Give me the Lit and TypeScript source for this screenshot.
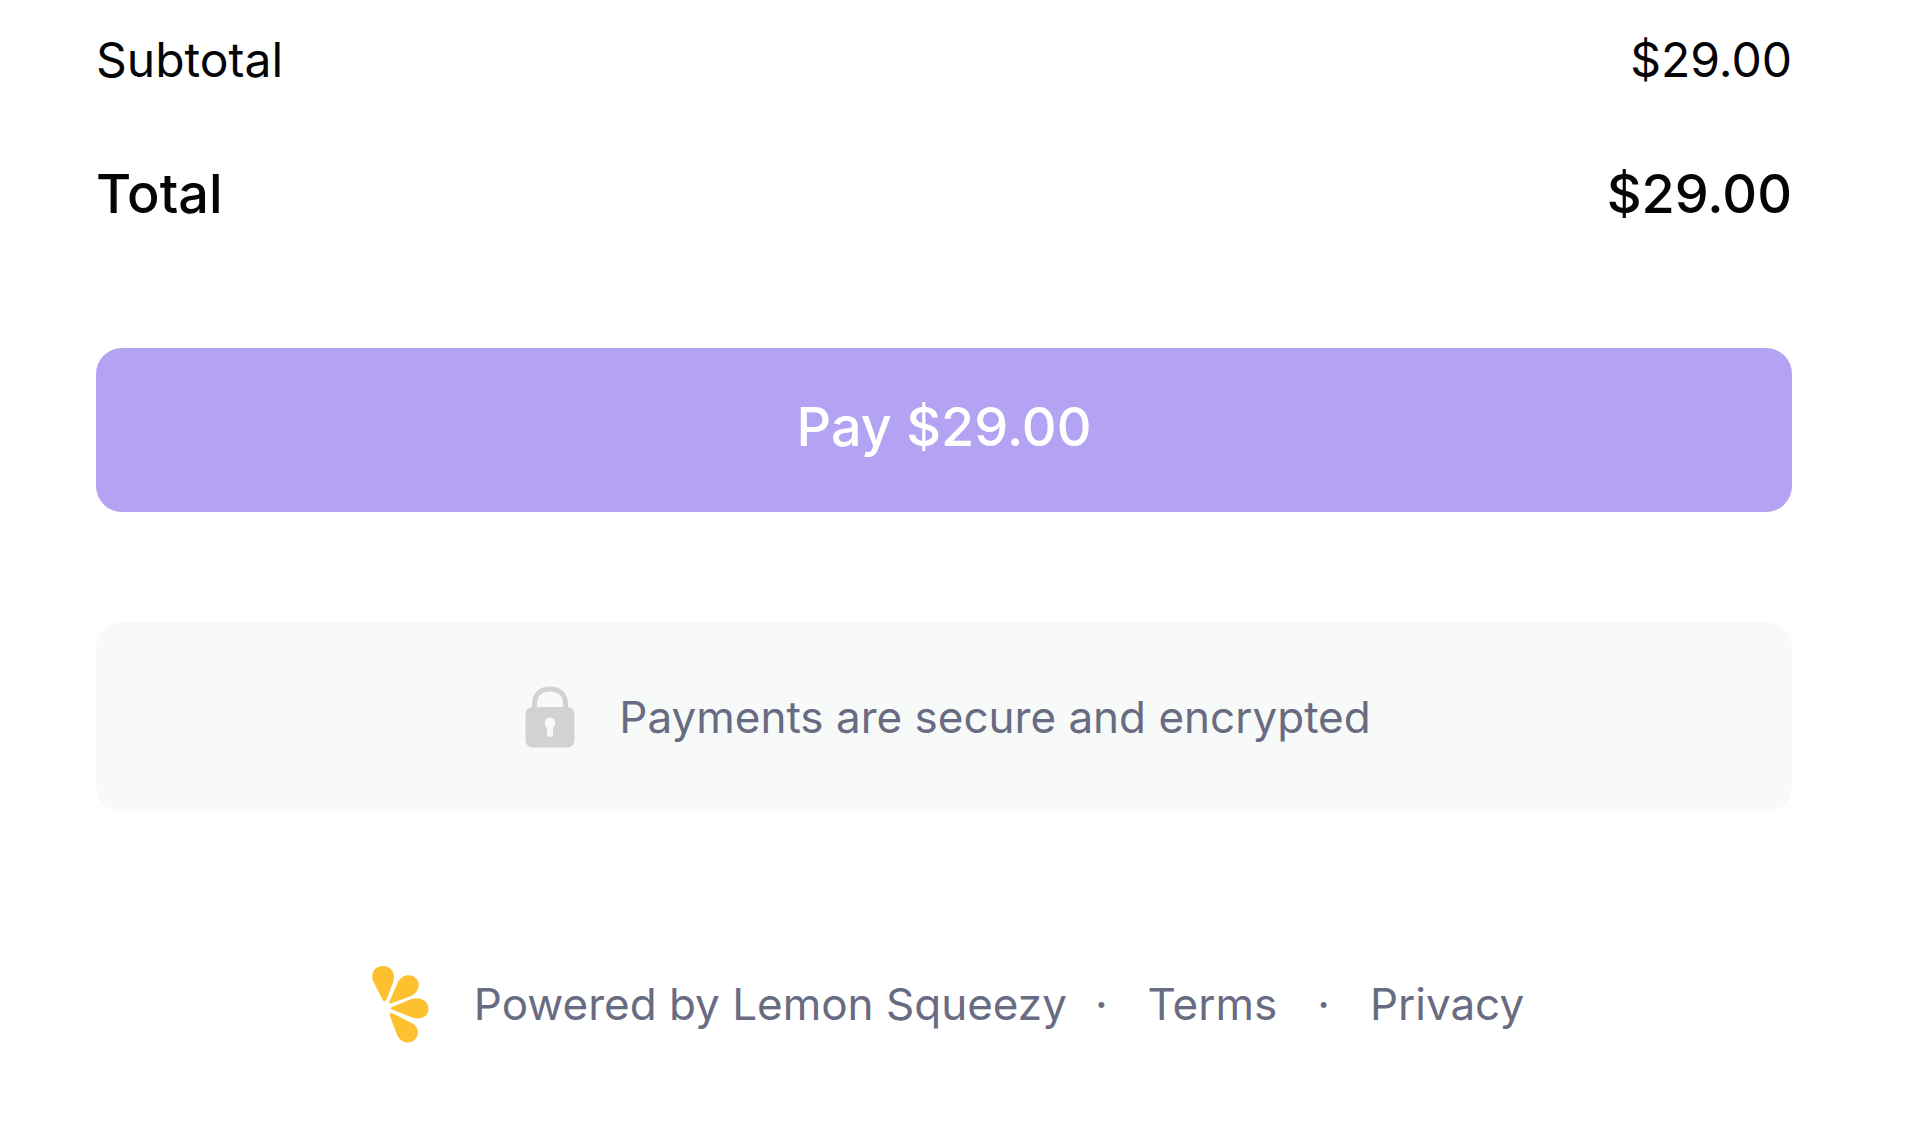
import { LitElement, html, css } from "lit";
import { customElement } from "lit/decorators.js";

@customElement("app-root")
class AppRoot extends LitElement {
  static styles = css`
    :host { display: block; background: #fff; font-family: Inter, "Liberation Sans", sans-serif; color: #050507; }
    .checkout { padding: 28px 128px 64px 96px; display: flex; flex-direction: column; }
    .totals { margin: 0; display: flex; flex-direction: column; gap: 66px; }
    .line { display: flex; justify-content: space-between; font-size: 48px; line-height: 64px; }
    .line dd { margin: 0; }
    .total { font-size: 54px; line-height: 72px; font-weight: 500; }
    .pay { margin-top: 118px; padding: 43px 24px 49px; border: 0; border-radius: 26px; background: #b4a2f3; color: #fff; font: 500 54px/72px Inter, "Liberation Sans", sans-serif; }
    .secure { margin-top: 110px; padding: 67px 24px 67px 32px; border-radius: 26px; background: #f8faf9; display: flex; align-items: center; justify-content: center; gap: 44px; color: #686b81; font-size: 44px; line-height: 56px; }
    .lock { width: 50px; height: 62px; display: block; margin: -3px 0; }
    .footer { margin-top: 153px; padding-left: 8px; display: flex; align-items: center; justify-content: center; color: #686b81; font-size: 44px; line-height: 56px; }
    .lemon { width: 58px; height: 78px; display: block; margin-right: 44px; }
    .footer a { color: inherit; text-decoration: none; }
    .dot { margin: 0 40px; }
    .brand + .dot { margin-left: 28px; }
  `;

  render() {
    return html`
      <main class="checkout">
        <dl class="totals">
          <div class="line"><dt>Subtotal</dt><dd>$29.00</dd></div>
          <div class="line total"><dt>Total</dt><dd>$29.00</dd></div>
        </dl>
        <button class="pay" type="button">Pay $29.00</button>
        <div class="secure">
          <svg class="lock" viewBox="0 0 50 62" aria-hidden="true">
            <path d="M9.500 23V18C9.500 8 16 3 25 3S40.500 8 40.500 18v5" fill="none" stroke="#d1d2d4" stroke-width="5"/>
            <rect x="0.500" y="21" width="49" height="40.500" rx="7" fill="#d1d2d4"/>
            <path d="M25 31.500a5.500 5.500 0 0 1 3 10V48a3 3 0 0 1-6 0v-6.500a5.500 5.500 0 0 1 3-10z" fill="#f8faf9"/>
          </svg>
          <span>Payments are secure and encrypted</span>
        </div>
        <footer class="footer">
          <svg class="lemon" viewBox="0 0 58 78" fill="#fdc02f" aria-hidden="true">
            <path d="M11 35.500Q13 37.500 14.500 34.500L20.500 19C25 8 19 1 11 1 4 1-2 7 1 16Z"/>
            <path d="M17 37.500Q17.500 39 20 38L38 31.500C47 28 48.500 19 45 14.500 41 9 31 8 26 17Z"/>
            <path d="M20 44.500Q17.500 43 20 42L38 34.500C48 31 56.500 36 56.500 44 56.500 51 49 56 39 52Z"/>
            <path d="M21 48.500Q17 47 18 51L24 67C27 77 35 79.500 41 76 47 72.500 48 64 41.500 59Z"/>
          </svg>
          <a class="brand" href="#">Powered by Lemon Squeezy</a><span class="dot">·</span><a href="#">Terms</a><span class="dot">·</span><a href="#">Privacy</a>
        </footer>
      </main>
    `;
  }
}
